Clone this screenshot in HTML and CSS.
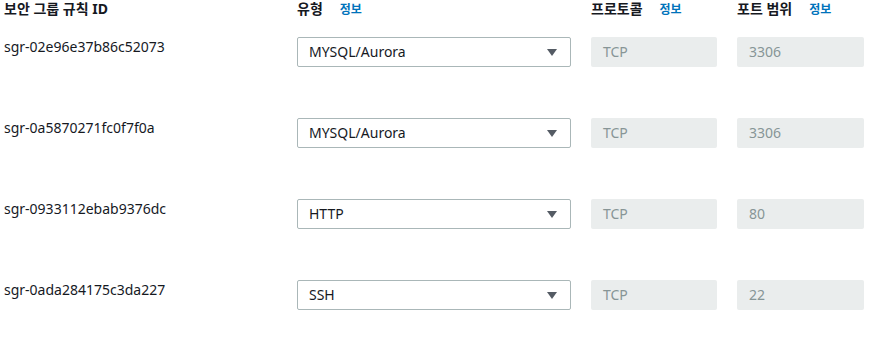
FILE: index.html
```html
<!DOCTYPE html>
<html lang="ko">
<head>
<meta charset="utf-8">
<link rel="stylesheet" href="styles.css">
</head>
<body>
<div class="rules">
  <div class="head">보안 그룹 규칙 ID</div>
  <div class="head">유형<a class="info">정보</a></div>
  <div class="head">프로토콜<a class="info">정보</a></div>
  <div class="head">포트 범위<a class="info">정보</a></div>

  <div class="cell id">sgr-02e96e37b86c52073</div>
  <div class="cell"><div class="select"><span>MYSQL/Aurora</span><span class="caret"></span></div></div>
  <div class="cell"><div class="field">TCP</div></div>
  <div class="cell"><div class="field">3306</div></div>

  <div class="cell id">sgr-0a5870271fc0f7f0a</div>
  <div class="cell"><div class="select"><span>MYSQL/Aurora</span><span class="caret"></span></div></div>
  <div class="cell"><div class="field">TCP</div></div>
  <div class="cell"><div class="field">3306</div></div>

  <div class="cell id">sgr-0933112ebab9376dc</div>
  <div class="cell"><div class="select"><span>HTTP</span><span class="caret"></span></div></div>
  <div class="cell"><div class="field">TCP</div></div>
  <div class="cell"><div class="field">80</div></div>

  <div class="cell id">sgr-0ada284175c3da227</div>
  <div class="cell"><div class="select"><span>SSH</span><span class="caret"></span></div></div>
  <div class="cell"><div class="field">TCP</div></div>
  <div class="cell"><div class="field">22</div></div>
</div>
</body>
</html>
```

FILE: styles.css
```css
html, body {
  margin: 0;
  background: #ffffff;
}
body {
  font-family: "Noto Sans", "Noto Sans CJK KR", sans-serif;
  font-size: 14px;
  color: #16191f;
}
.rules {
  display: grid;
  grid-template-columns: 273px 274px 126px 127px;
  column-gap: 20px;
  padding-left: 4px;
}
.head {
  font-weight: 700;
  line-height: 18px;
  height: 18px;
  margin-bottom: 19px;
  display: flex;
  align-items: baseline;
}
.info {
  color: #0073bb;
  font-size: 12px;
  font-weight: 700;
  margin-left: 17px;
}
.cell {
  height: 81px;
}
.cell:nth-last-child(-n+4) {
  height: 30px;
}
.id {
  line-height: 20px;
}
.select {
  box-sizing: border-box;
  height: 30px;
  border: 1px solid #aab7b8;
  border-radius: 2px;
  display: flex;
  align-items: center;
  justify-content: space-between;
  padding: 0 13px 0 11px;
  line-height: 20px;
}
.caret {
  width: 0;
  height: 0;
  border-left: 5px solid transparent;
  border-right: 5px solid transparent;
  border-top: 7px solid #545b64;
}
.field {
  box-sizing: border-box;
  height: 30px;
  background: #eaeded;
  border-radius: 2px;
  padding: 0 12px;
  display: flex;
  align-items: center;
  color: #879596;
  line-height: 20px;
}
```
